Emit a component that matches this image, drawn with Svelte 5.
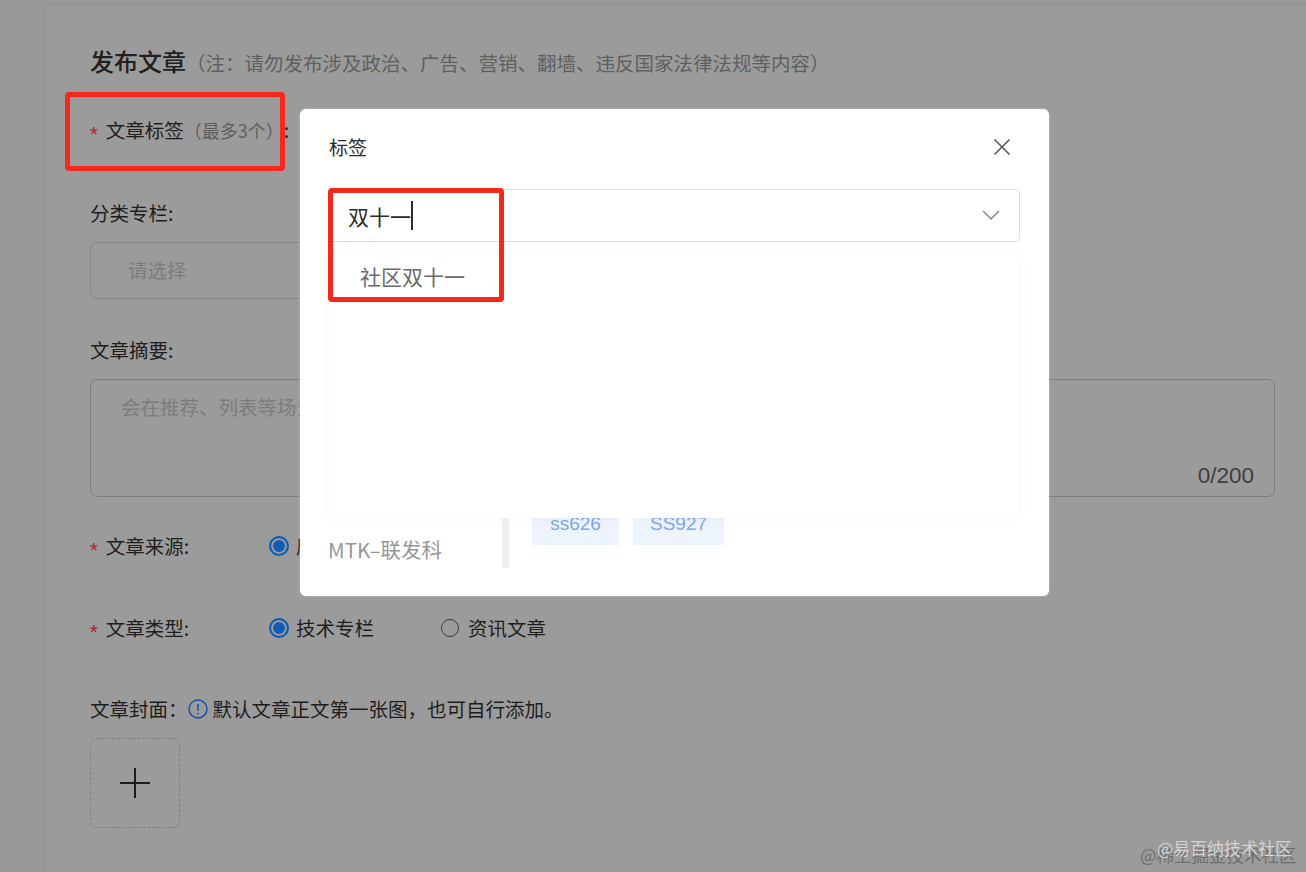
<script>
	let radios = [
		{ label: '技术专栏', on: true },
		{ label: '资讯文章', on: false }
	];
</script>

<div class="page">
	<main class="card">
		<h1>发布文章<span>（注：请勿发布涉及政治、广告、营销、翻墙、违反国家法律法规等内容）</span></h1>

		<div class="label tags"><i>*</i>文章标签<small>（最多3个）</small>:</div>

		<div class="label cat">分类专栏:</div>
		<div class="select"><span>请选择</span></div>

		<div class="label sum">文章摘要:</div>
		<div class="textarea">
			<span>会在推荐、列表等场景外露，帮助读者快速了解内容</span>
			<em>0/200</em>
		</div>

		<div class="row source">
			<div class="label"><i>*</i>文章来源:</div>
			<div class="radio"><b class="dot on"></b>原创</div>
		</div>

		<div class="row kind">
			<div class="label"><i>*</i>文章类型:</div>
			{#each radios as r}
				<div class="radio"><b class="dot" class:on={r.on}></b>{r.label}</div>
			{/each}
		</div>

		<div class="label cover">
			文章封面：<svg class="info" width="20" height="20" viewBox="0 0 20 20">
				<circle cx="10" cy="10" r="9" fill="none" stroke="#0f52a8" stroke-width="1.4" />
				<path d="M10 5v7M10 14v1.6" stroke="#0f52a8" stroke-width="1.5" fill="none" />
			</svg>默认文章正文第一张图，也可自行添加。
		</div>
		<div class="upload">
			<svg width="32" height="32" viewBox="0 0 32 32">
				<path d="M16 1v30M1 16h30" stroke="#1c1c1c" stroke-width="2" fill="none" />
			</svg>
		</div>
	</main>

	<section class="modal">
		<header>
			<h2>标签</h2>
			<svg width="18" height="18" viewBox="0 0 18 18">
				<path d="M1.5 1.5l15 15M16.5 1.5l-15 15" stroke="#555" stroke-width="1.5" fill="none" />
			</svg>
		</header>
		<div class="combo">
			<span class="typed">双十一</span><span class="caret"></span>
			<svg class="chev" width="18" height="10" viewBox="0 0 18 10">
				<path d="M1 1l8 8 8-8" stroke="#8a8a8a" stroke-width="1.5" fill="none" />
			</svg>
		</div>
		<div class="lists">
			<div class="vendor">MTK–联发科</div>
			<div class="chips">
				<span class="chip a">ss626</span>
				<span class="chip b">SS927</span>
			</div>
		</div>
		<div class="drop">社区双十一</div>
	</section>

	<div class="mark m1"></div>
	<div class="mark m2"></div>

	<div class="wm dark">@稀土掘金技术社区</div>
	<div class="wm light">@易百纳技术社区</div>
</div>

<style>
	:global(body) {
		margin: 0;
	}
	.page {
		position: relative;
		width: 1306px;
		height: 872px;
		overflow: hidden;
		background: #989898;
		font-family: "Noto Sans CJK SC", "Noto Sans", sans-serif;
		color: #1e1e1e;
	}
	.card {
		box-sizing: border-box;
		height: 868px;
		margin-left: 44px;
		padding: 38px 31px 0 45px;
		background: #9b9b9b;
		border-left: 1px solid #8e8e8e;
		border-top: 1px solid #929292;
		position: relative;
		top: 4px;
	}
	h1 {
		margin: 0;
		font-size: 24px;
		line-height: 36px;
		font-weight: 500;
		color: #202020;
	}
	h1 span {
		font-size: 19.5px;
		font-weight: 400;
		color: #5f5f5f;
	}
	.label {
		font-size: 19.5px;
		line-height: 28px;
		color: #1e1e1e;
	}
	.label i {
		font-family: "Liberation Sans", sans-serif;
		font-style: normal;
		color: #a8201c;
		margin-right: 8px;
		font-size: 20px;
		line-height: 1;
		vertical-align: -3px;
	}
	.label small {
		font-size: 18px;
		color: #5f5f5f;
	}
	.tags {
		margin-top: 35px;
	}
	.cat {
		margin-top: 55px;
	}
	.select {
		box-sizing: border-box;
		height: 57px;
		width: 400px;
		margin-top: 15px;
		padding: 0 0 3px 37px;
		border: 1px solid #858585;
		border-radius: 7px;
		display: flex;
		align-items: center;
		font-size: 19.5px;
		color: #7c7c7c;
	}
	.sum {
		margin-top: 37px;
	}
	.textarea {
		box-sizing: border-box;
		position: relative;
		height: 118px;
		margin-top: 15px;
		padding: 13px 30px;
		border: 1px solid #7d7d7d;
		border-radius: 7px;
		font-size: 19.5px;
		line-height: 28px;
		color: #7c7c7c;
	}
	.textarea em {
		position: absolute;
		right: 20px;
		bottom: 6px;
		font-style: normal;
		font-size: 22.5px;
		font-family: "Liberation Sans", sans-serif;
		color: #3e3e3e;
	}
	.row {
		display: flex;
		align-items: center;
	}
	.row .label {
		width: 179px;
	}
	.source {
		margin-top: 35px;
	}
	.kind {
		margin-top: 54px;
	}
	.radio {
		display: flex;
		align-items: center;
		font-size: 19.5px;
		line-height: 28px;
		width: 172px;
	}
	.dot {
		box-sizing: border-box;
		width: 18px;
		height: 18px;
		margin-right: 9px;
		border: 1.5px solid #3c3c3c;
		border-radius: 50%;
		flex: none;
	}
	.dot.on {
		border: 2px solid #0f5cb4;
		background: #0f5cb4;
		box-shadow: inset 0 0 0 2px #9b9b9b;
		width: 20px;
		height: 20px;
		margin-right: 7px;
	}
	.cover {
		margin-top: 53px;
		display: flex;
		align-items: center;
	}
	.info {
		margin-right: 5px;
	}
	.upload {
		box-sizing: border-box;
		width: 90px;
		height: 90px;
		margin-top: 15px;
		border: 1px dashed #808080;
		border-radius: 7px;
		display: flex;
		align-items: center;
		justify-content: center;
	}
	.upload svg {
		margin-right: 1px;
	}
	.modal {
		position: absolute;
		left: 300px;
		top: 109px;
		box-sizing: border-box;
		width: 749px;
		height: 487px;
		padding: 0 29px;
		background: #fff;
		border-radius: 6px;
		box-shadow: 0 0 2px rgba(255, 255, 255, 0.6);
	}
	header {
		display: flex;
		align-items: center;
		justify-content: space-between;
		height: 76px;
		padding: 0 9px 0 0;
		margin-bottom: 4px;
	}
	h2 {
		margin: -2px 0 0 0;
		font-size: 19px;
		font-weight: 400;
		color: #2a2a2a;
	}
	.combo {
		box-sizing: border-box;
		display: flex;
		align-items: center;
		position: relative;
		width: 691px;
		height: 53px;
		padding-left: 18px;
		border: 1px solid #dedede;
		border-radius: 4px;
		font-size: 21px;
		color: #2b2b2b;
	}
	.caret {
		width: 2px;
		height: 29px;
		background: #2b2b2b;
	}
	.chev {
		position: absolute;
		right: 19px;
		top: 20px;
	}
	.lists {
		display: flex;
		align-items: flex-end;
		margin-top: 246px;
		height: 80px;
	}
	.vendor {
		width: 174px;
		margin-left: -1px;
		font-size: 20.5px;
		line-height: 28px;
		color: #979797;
		padding-bottom: 5px;
	}
	.chips {
		display: flex;
		gap: 14px;
		align-items: flex-start;
		height: 100%;
		padding-left: 23px;
		border-left: 7px solid #f0f0f0;
	}
	.chip {
		box-sizing: border-box;
		height: 57px;
		padding-top: 22px;
		background: #eef4fd;
		font-family: "Liberation Sans", sans-serif;
		font-size: 19px;
		line-height: 28px;
		color: #7aa7ef;
		text-align: center;
	}
	.chip.a {
		width: 87px;
	}
	.chip.b {
		width: 91px;
	}
	.drop {
		position: absolute;
		left: 29px;
		top: 145px;
		box-sizing: border-box;
		width: 690px;
		height: 264px;
		padding: 5px 0 0 31px;
		background: #fff;
		box-shadow: 0 0 12px rgba(0, 0, 0, 0.035);
		font-size: 21px;
		line-height: 34px;
		color: #6a6a6a;
	}
	.mark {
		position: absolute;
		box-sizing: border-box;
		border: 5px solid #f5281c;
		border-radius: 4px;
	}
	.m1 {
		left: 65px;
		top: 92px;
		width: 220px;
		height: 79px;
	}
	.m2 {
		left: 328px;
		top: 188px;
		width: 176px;
		height: 114px;
	}
	.wm {
		position: absolute;
		line-height: 22px;
		white-space: nowrap;
	}
	.dark {
		left: 1140px;
		top: 844px;
		font-size: 17.5px;
		color: #6e6e6e;
	}
	.light {
		left: 1157px;
		top: 837px;
		font-size: 17px;
		color: #d4d4d4;
	}
</style>
